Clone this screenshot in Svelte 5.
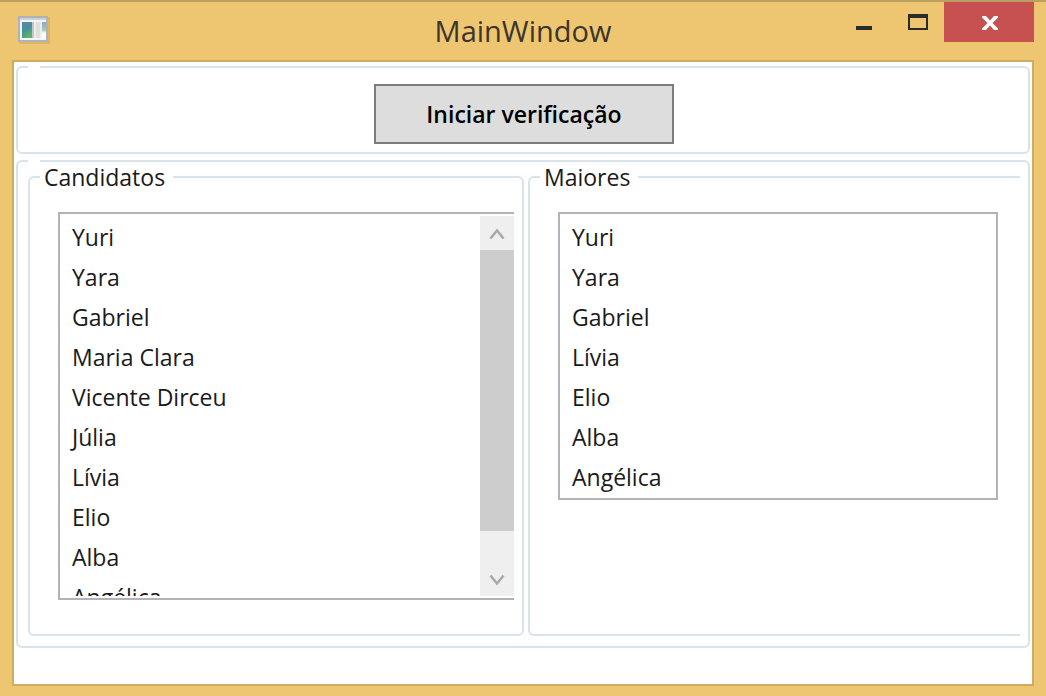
<script>
  const candidates = [
    'Yuri', 'Yara', 'Gabriel', 'Maria Clara', 'Vicente Dirceu',
    'Júlia', 'Lívia', 'Elio', 'Alba', 'Angélica'
  ];
  const oldest = ['Yuri', 'Yara', 'Gabriel', 'Lívia', 'Elio', 'Alba', 'Angélica'];

  let list;
  let progress = $state(0);

  function step(direction) {
    list.scrollTop += direction * 40;
  }

  function track() {
    const range = list.scrollHeight - list.clientHeight;
    progress = range > 0 ? list.scrollTop / range : 0;
  }
</script>

<div class="window">
  <header class="titlebar">
    <svg class="app-icon" viewBox="0 0 32 28" aria-hidden="true">
      <defs>
        <linearGradient id="pane" x1="0" y1="0" x2="0.4" y2="1">
          <stop offset="0" stop-color="#5f86b4" />
          <stop offset="0.5" stop-color="#45909a" />
          <stop offset="1" stop-color="#60b06a" />
        </linearGradient>
        <linearGradient id="side" x1="0" y1="0" x2="0" y2="1">
          <stop offset="0" stop-color="#84a6d2" />
          <stop offset="0.5" stop-color="#a5cfaa" />
          <stop offset="0.7" stop-color="#ffffff" />
        </linearGradient>
      </defs>
      <rect x="1" y="1" width="31" height="27" rx="1" fill="#c9a45c" opacity="0.5" />
      <rect x="1" y="1" width="28" height="24" fill="#f4f4f4" stroke="#b0b2ba" stroke-width="2" />
      <rect x="2" y="2" width="26" height="2" fill="#cdd0d6" />
      <rect x="4" y="6" width="10" height="16" fill="url(#pane)" />
      <rect x="14" y="6" width="2" height="16" fill="#c6c6ce" />
      <rect x="16" y="6" width="8" height="16" fill="#eeeeec" />
      <rect x="18" y="6" width="4" height="16" fill="#dfdfdc" />
      <rect x="24" y="6" width="4" height="16" fill="url(#side)" />
    </svg>
    <h1>MainWindow</h1>
    <div class="controls">
      <button type="button" aria-label="Minimizar">
        <svg viewBox="0 0 54 40" aria-hidden="true"><rect x="20" y="24" width="16" height="4" fill="#2b2b28" /></svg>
      </button>
      <button type="button" aria-label="Maximizar">
        <svg viewBox="0 0 54 40" aria-hidden="true">
          <path d="M18 12h20v16H18zM20 16v10h16V16z" fill="#2b2b28" fill-rule="evenodd" />
        </svg>
      </button>
      <button type="button" class="close" aria-label="Fechar">
        <svg viewBox="0 0 90 40" aria-hidden="true">
          <path d="M38 14h4l4 4.500 4-4.500h4v1.500L48.500 21l5.500 5.500V28h-4l-4-4.500-4 4.500h-4v-1.500l5.500-5.500-5.500-5.500z" fill="#fff" />
        </svg>
      </button>
    </div>
  </header>

  <main>
    <section class="group actions">
      <button type="button" class="start">Iniciar verificação</button>
    </section>

    <section class="group lists">
      <div class="clip">
        <div class="columns">
          <fieldset>
            <legend>Candidatos</legend>
            <div class="listbox scrolling">
              <ul bind:this={list} onscroll={track}>
                {#each candidates as name}<li>{name}</li>{/each}
              </ul>
              <div class="scrollbar">
                <button type="button" aria-label="Rolar para cima" onclick={() => step(-1)}>
                  <svg viewBox="0 0 34 34" aria-hidden="true"><path d="M10.500 22.500L17 14.500l6.500 8" /></svg>
                </button>
                <div class="track">
                  <div class="thumb" style:top="{progress * 10}%"></div>
                </div>
                <button type="button" aria-label="Rolar para baixo" onclick={() => step(1)}>
                  <svg viewBox="0 0 34 34" aria-hidden="true"><path d="M10.500 13.500L17 21.500l6.500-8" /></svg>
                </button>
              </div>
            </div>
          </fieldset>

          <fieldset class="open">
            <legend>Maiores</legend>
            <div class="listbox">
              <ul>
                {#each oldest as name}<li>{name}</li>{/each}
              </ul>
            </div>
          </fieldset>
        </div>
      </div>
    </section>
  </main>
</div>

<style>
  :global(body) {
    margin: 0;
  }

  * {
    box-sizing: border-box;
  }

  .window {
    display: flex;
    flex-direction: column;
    min-height: 100vh;
    padding: 0 12px 10px;
    border-top: 2px solid #b99f62;
    background: #eec671;
    color: #1a1a1a;
    font: 23px/30px "Open Sans", "Noto Sans", sans-serif;
  }

  .titlebar {
    display: grid;
    grid-template-columns: 1fr auto 1fr;
    height: 58px;
  }

  .app-icon {
    width: 32px;
    height: 28px;
    margin: 14px 0 0 6px;
  }

  h1 {
    margin: 0;
    color: #3b352b;
    font-size: 29px;
    font-weight: 400;
    line-height: 58px;
  }

  .controls {
    display: flex;
    justify-content: flex-end;
    align-items: flex-start;
  }

  button {
    padding: 0;
    border: 0;
    background: none;
    color: inherit;
    font: inherit;
  }

  .controls button {
    width: 54px;
    height: 40px;
  }

  .controls .close {
    width: 90px;
    background: #c75050;
  }

  button svg {
    display: block;
    width: 100%;
    height: 100%;
  }

  main {
    flex: 1;
    display: flex;
    flex-direction: column;
    gap: 6px;
    padding: 4px 2px;
    border: 2px solid #d0ac60;
    background: #fff;
  }

  .group {
    position: relative;
    border: 2px solid #d9e3ea;
    border-radius: 6px;
  }

  /* Empty caption slot in the frame's top line */
  .group::before {
    content: "";
    position: absolute;
    top: -2px;
    left: 10px;
    width: 12px;
    height: 2px;
    background: #fff;
  }

  .actions {
    display: flex;
    justify-content: center;
    padding: 16px 0 8px 2px;
  }

  .start {
    width: 300px;
    height: 60px;
    border: 2px solid #7c7c7c;
    background: #ddd;
    color: #000;
    font-weight: 600;
  }

  .lists {
    padding: 0 8px 10px 10px;
  }

  .clip {
    overflow: hidden;
  }

  .columns {
    display: grid;
    grid-template-columns: 1fr 1fr;
    gap: 4px;
    margin-right: -4px;
  }

  fieldset {
    min-width: 0;
    margin: 0;
    padding: 20px 8px 34px 28px;
    border: 2px solid #d9e3ea;
    border-radius: 6px;
  }

  .open {
    padding-right: 26px;
    border-right: 0;
    border-radius: 6px 0 0 6px;
  }

  legend {
    margin-left: -18px;
    padding: 0 8px 0 4px;
  }

  .listbox {
    display: flex;
    padding: 2px;
    border: 2px solid #b3b2b8;
  }

  .scrolling {
    height: 388px;
    padding-right: 0;
    border-right: 0;
  }

  ul {
    flex: 1;
    margin: 0;
    padding: 0;
    overflow: hidden;
    list-style: none;
  }

  li {
    padding: 6px 10px 4px;
  }

  .scrollbar {
    display: flex;
    flex-direction: column;
    width: 34px;
    background: #efefef;
  }

  .scrollbar button {
    height: 34px;
  }

  .scrollbar path {
    fill: none;
    stroke: #a9a9a9;
    stroke-width: 2.5;
  }

  .track {
    position: relative;
    flex: 1;
  }

  .thumb {
    position: absolute;
    left: 0;
    width: 100%;
    height: 90%;
    background: #cdcdcd;
  }
</style>
